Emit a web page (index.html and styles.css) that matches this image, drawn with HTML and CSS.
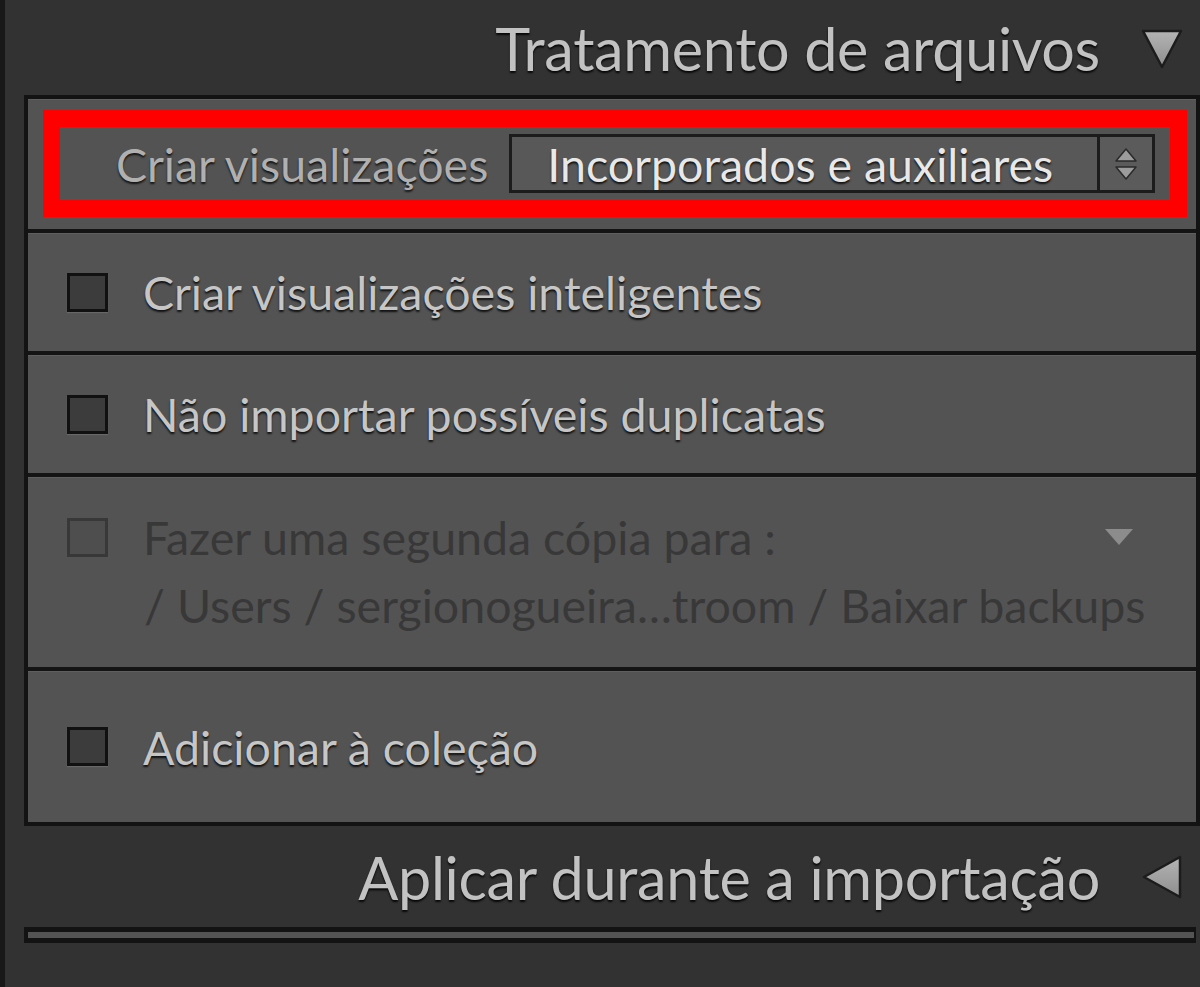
FILE: index.html
```html
<!DOCTYPE html>
<html lang="pt-BR">
<head>
    <meta charset="UTF-8" />
    <meta name="viewport" content="width=device-width, initial-scale=1.0"/>
    <title>Tratamento de arquivos</title>
    <link rel="stylesheet" href="styles.css">
</head>
<body>
    <div class="sidebar">
        <!-- Tratamento de arquivos -->
        <div class="section-head">
            <span class="head-title">Tratamento de arquivos</span>
            <svg class="head-arrow" width="44" height="44" viewBox="0 0 44 44">
                <defs>
                    <linearGradient id="triDown" x1="0" y1="0" x2="0" y2="1">
                        <stop offset="0" stop-color="#b4b4b4"/>
                        <stop offset="1" stop-color="#8e8e8e"/>
                    </linearGradient>
                </defs>
                <polygon points="3,5 41,5 22,41" fill="url(#triDown)" stroke="#1c1c1c" stroke-width="2.5" stroke-linejoin="round"/>
            </svg>
        </div>

        <div class="panel">
            <div class="row row-previews">
                <div class="marked">
                    <span class="field-label">Criar visualizações</span>
                    <div class="select">
                        <span class="select-value">Incorporados e auxiliares</span>
                        <span class="stepper">
                            <svg width="28" height="36" viewBox="0 0 28 36">
                                <polygon points="14,3 4,15 24,15" fill="#9c9c9c" stroke="#2a2a2a" stroke-width="1.5" stroke-linejoin="round"/>
                                <polygon points="4,21 24,21 14,33" fill="#9c9c9c" stroke="#2a2a2a" stroke-width="1.5" stroke-linejoin="round"/>
                            </svg>
                        </span>
                    </div>
                </div>
            </div>

            <div class="row row-check">
                <span class="checkbox"></span>
                <span class="row-text">Criar visualizações inteligentes</span>
            </div>

            <div class="row row-check">
                <span class="checkbox"></span>
                <span class="row-text">Não importar possíveis duplicatas</span>
            </div>

            <div class="row row-copy">
                <div class="copy-line">
                    <span class="checkbox disabled"></span>
                    <span class="row-text dim">Fazer uma segunda cópia para :</span>
                    <svg class="copy-arrow" width="30" height="18" viewBox="0 0 30 18">
                        <polygon points="1,1 29,1 15,17" fill="#8c8c8c"/>
                    </svg>
                </div>
                <div class="copy-path dim">/ Users / sergionogueira…troom / Baixar backups</div>
            </div>

            <div class="row row-check row-last">
                <span class="checkbox"></span>
                <span class="row-text">Adicionar à coleção</span>
            </div>
        </div>

        <!-- Aplicar durante a importação -->
        <div class="section-head head-second">
            <span class="head-title">Aplicar durante a importação</span>
            <svg class="head-arrow" width="44" height="44" viewBox="0 0 44 44">
                <defs>
                    <linearGradient id="triLeft" x1="0" y1="0" x2="0" y2="1">
                        <stop offset="0" stop-color="#b4b4b4"/>
                        <stop offset="1" stop-color="#8e8e8e"/>
                    </linearGradient>
                </defs>
                <polygon points="40,2 40,42 4,22" fill="url(#triLeft)" stroke="#1c1c1c" stroke-width="2.5" stroke-linejoin="round"/>
            </svg>
        </div>
        <div class="panel-collapsed"></div>
    </div>
</body>
</html>
```

FILE: styles.css
```css
* {
    margin: 0;
    padding: 0;
    box-sizing: border-box;
}

body {
    width: 1200px;
    height: 987px;
    overflow: hidden;
    background: #323232;
    border-left: 5px solid #181818;
    font-family: 'Lato', 'Open Sans', sans-serif;
}

.sidebar {
    padding-left: 19px;
}

/* Section headers */
.section-head {
    height: 95px;
    display: flex;
    align-items: center;
    justify-content: flex-end;
    padding-right: 16px;
    gap: 40px;
}

.head-title {
    font-size: 59.3px;
    color: #c2c2c2;
    text-shadow: 0 2px 2px rgba(0, 0, 0, 0.85);
    letter-spacing: -0.3px;
}

.head-second {
    height: 101px;
}

/* Panel */
.panel {
    background: #535353;
    border: 4px solid #131313;
}

.row {
    border-bottom: 4px solid #141414;
    box-shadow: inset 0 1px 0 #5f5f5f;
}

.row-last {
    border-bottom: none;
}

.row-previews {
    height: 134px;
    padding: 11px 9px 12px 15px;
}

.marked {
    height: 107px;
    border: 17px solid #fe0000;
    display: flex;
    align-items: center;
    padding-left: 56px;
    padding-right: 15px;
    gap: 21px;
}

.field-label {
    font-size: 46.5px;
    color: #b0b0b0;
    text-shadow: 0 2px 2px rgba(0, 0, 0, 0.75);
    white-space: nowrap;
}

.select {
    flex: 1;
    height: 59px;
    display: flex;
    border: 3px solid #1c1c1c;
    background: #585858;
}

.select-value {
    flex: 1;
    display: flex;
    align-items: center;
    padding-left: 35px;
    font-size: 46.5px;
    color: #e8e8e8;
    text-shadow: 0 2px 2px rgba(0, 0, 0, 0.8);
    white-space: nowrap;
    overflow: hidden;
}

.stepper {
    width: 55px;
    flex-shrink: 0;
    border-left: 3px solid #1c1c1c;
    background: #5b5b5b;
    display: flex;
    align-items: center;
    justify-content: center;
}

/* Checkbox rows */
.row-check {
    display: flex;
    align-items: center;
    padding-left: 39px;
    gap: 35px;
}

.row-check:nth-child(2) { height: 122px; }
.row-check:nth-child(3) { height: 122px; }
.row-last { height: 151px; }

.checkbox {
    width: 41px;
    height: 39px;
    flex-shrink: 0;
    border: 3px solid #111;
    background: #3c3c3c;
    box-shadow: 0 1px 1px rgba(255, 255, 255, 0.12);
}

.checkbox.disabled {
    border: 3px solid #383838;
    background: #4e4e4e;
    box-shadow: none;
}

.row-text {
    font-size: 46.5px;
    color: #c6c6c6;
    text-shadow: 0 2px 2px rgba(0, 0, 0, 0.8);
    white-space: nowrap;
}

.dim {
    color: #383838;
    text-shadow: none;
}

/* Second copy row */
.row-copy {
    height: 194px;
    padding: 32px 0 0 39px;
}

.copy-line {
    display: flex;
    align-items: center;
    gap: 35px;
}

.copy-arrow {
    margin-left: auto;
    margin-right: 62px;
}

.copy-path {
    font-size: 46.5px;
    margin-top: 12px;
    padding-left: 77px;
    white-space: nowrap;
}

/* Collapsed panel under second header */
.panel-collapsed {
    height: 16px;
    margin-right: 4px;
    border: 5px solid #131313;
    border-left-width: 4px;
    border-right-width: 2px;
    background: #545454;
}
```
